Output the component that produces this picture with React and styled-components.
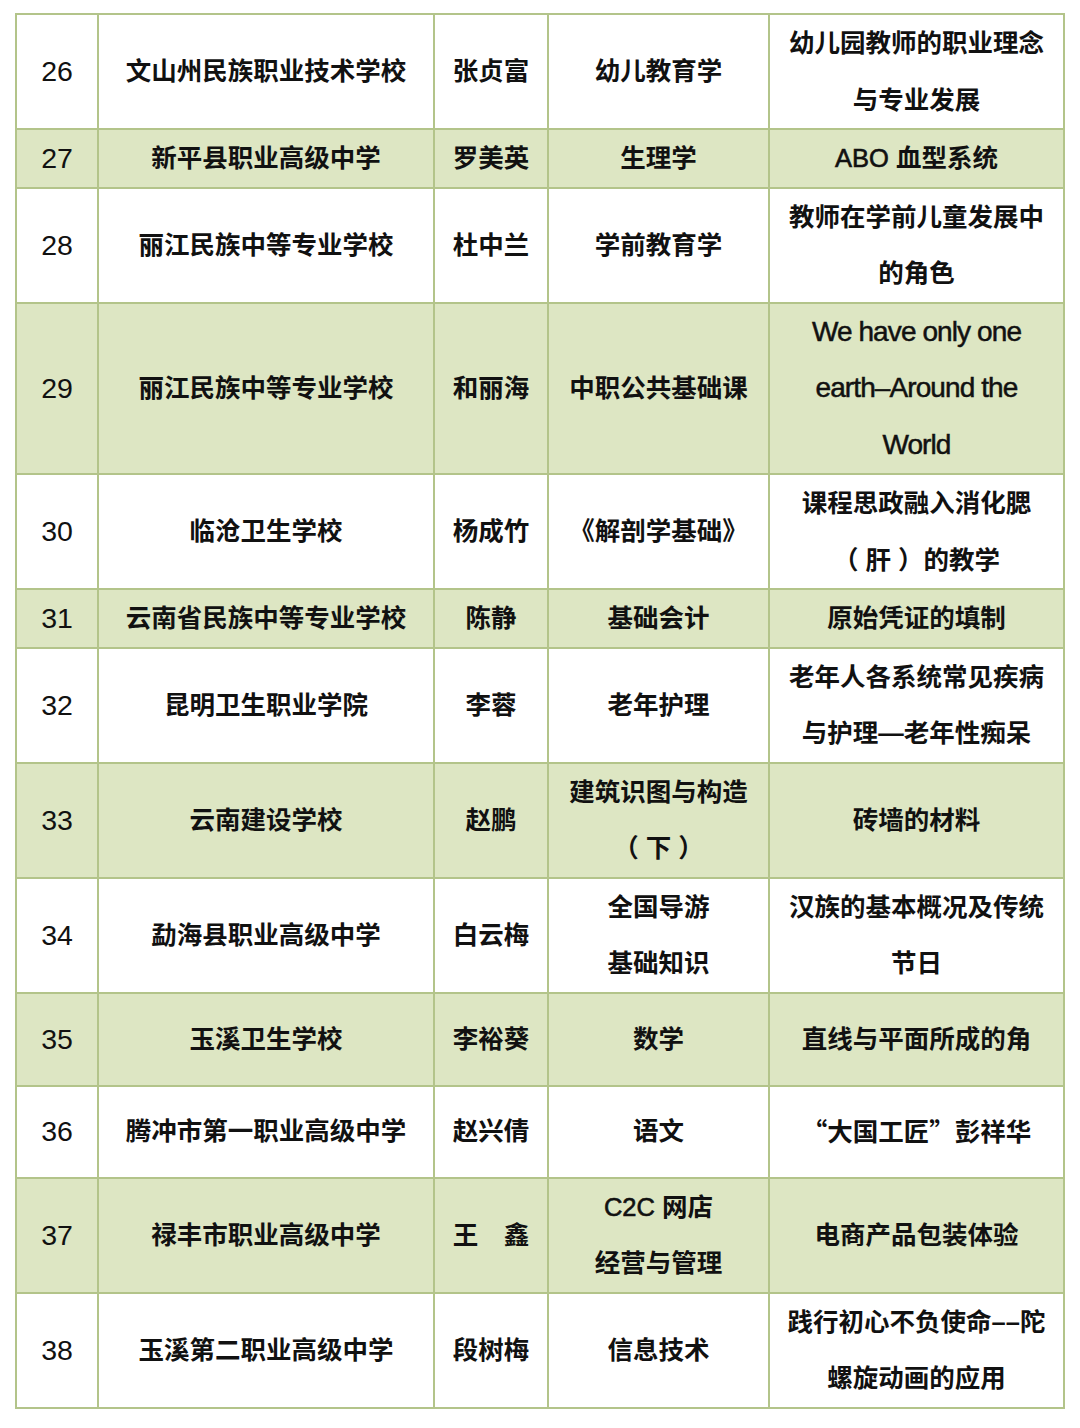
import React from 'react';
import styled, { createGlobalStyle } from 'styled-components';

const GlobalStyle = createGlobalStyle`
  html, body {
    margin: 0;
    padding: 0;
    background: #ffffff;
  }
  body {
    font-family: "Liberation Sans", "Noto Sans CJK SC", sans-serif;
    color: #111;
  }
`;

const LINE = '#b3c48a';
const COLS = '82px 336px 114px 221px 295px';

const Page = styled.div`
  width: 1080px;
  padding: 13px 0 0 15px;
  box-sizing: border-box;
`;

const Sheet = styled.div`
  display: flex;
  flex-direction: column;
  width: fit-content;
  border-top: 2px solid ${LINE};
  border-left: 2px solid ${LINE};
`;

const Row = styled.div`
  display: grid;
  grid-template-columns: ${COLS};
  min-height: ${p => (p.$h ? `${p.$h}px` : '0')};
  background: ${p => (p.$shaded ? '#dde6c3' : '#ffffff')};
`;

const Cell = styled.div`
  display: flex;
  align-items: center;
  justify-content: center;
  box-sizing: border-box;
  border-right: 2px solid ${LINE};
  border-bottom: 2px solid ${LINE};
  padding: 0 6px;
`;

const CellText = styled.div`
  text-align: center;
  white-space: nowrap;
  font-size: 25.5px;
  font-weight: 700;
  line-height: 56.5px;
  color: #111;
  font-family: "Liberation Sans", "Noto Sans CJK SC", sans-serif;
`;

const NumText = styled(CellText)`
  font-size: 28.5px;
  font-weight: 400;
`;

const LatinText = styled(CellText)`
  font-size: 28px;
  font-weight: 400;
  letter-spacing: -0.9px;
  -webkit-text-stroke: 0.5px #111;
`;

// Latin words inside Chinese cells are set a little lighter
const Latin = styled.span`
  font-weight: 400;
  -webkit-text-stroke: 0.6px #111;
`;

const Cjk = styled.span`
  font-family: "Noto Sans CJK SC", sans-serif;
`;

const rows = [
  { n: 26, school: '文山州民族职业技术学校', name: '张贞富', subject: ['幼儿教育学'], topic: ['幼儿园教师的职业理念', '与专业发展'] },
  { n: 27, school: '新平县职业高级中学', name: '罗美英', subject: ['生理学'], topic: [<React.Fragment key="a"><Latin>ABO</Latin> 血型系统</React.Fragment>] },
  { n: 28, school: '丽江民族中等专业学校', name: '杜中兰', subject: ['学前教育学'], topic: ['教师在学前儿童发展中', '的角色'] },
  { n: 29, school: '丽江民族中等专业学校', name: '和丽海', subject: ['中职公共基础课'], topic: ['We have only one', 'earth\u2013Around the', 'World'], latin: true },
  { n: 30, school: '临沧卫生学校', name: '杨成竹', subject: ['《解剖学基础》'], topic: ['课程思政融入消化腮', '（ 肝 ）的教学'] },
  { n: 31, school: '云南省民族中等专业学校', name: '陈静', subject: ['基础会计'], topic: ['原始凭证的填制'] },
  { n: 32, school: '昆明卫生职业学院', name: '李蓉', subject: ['老年护理'], topic: ['老年人各系统常见疾病', '与护理—老年性痴呆'] },
  { n: 33, school: '云南建设学校', name: '赵鹏', subject: ['建筑识图与构造', '（ 下 ）'], topic: ['砖墙的材料'] },
  { n: 34, school: '勐海县职业高级中学', name: '白云梅', subject: ['全国导游', '基础知识'], topic: ['汉族的基本概况及传统', '节日'] },
  { n: 35, school: '玉溪卫生学校', name: '李裕葵', subject: ['数学'], topic: ['直线与平面所成的角'], h: 93 },
  { n: 36, school: '腾冲市第一职业高级中学', name: '赵兴倩', subject: ['语文'], topic: [<Cjk key="q">“大国工匠”彭祥华</Cjk>], h: 92 },
  { n: 37, school: '禄丰市职业高级中学', name: '王\u2003鑫', subject: [<React.Fragment key="c"><Latin>C2C</Latin> 网店</React.Fragment>, '经营与管理'], topic: ['电商产品包装体验'] },
  { n: 38, school: '玉溪第二职业高级中学', name: '段树梅', subject: ['信息技术'], topic: ['践行初心不负使命\u2013\u2013陀', '螺旋动画的应用'] },
];

const Lines = ({ items }) =>
  items.map((t, i) => (
    <React.Fragment key={i}>
      {i > 0 && <br />}
      {t}
    </React.Fragment>
  ));

export default function App() {
  return (
    <>
      <GlobalStyle />
      <Page>
        <Sheet>
          {rows.map((r, i) => {
            const Topic = r.latin ? LatinText : CellText;
            return (
              <Row key={r.n} $shaded={i % 2 === 1} $h={r.h}>
                <Cell><NumText>{r.n}</NumText></Cell>
                <Cell><CellText>{r.school}</CellText></Cell>
                <Cell><CellText>{r.name}</CellText></Cell>
                <Cell><CellText><Lines items={r.subject} /></CellText></Cell>
                <Cell><Topic><Lines items={r.topic} /></Topic></Cell>
              </Row>
            );
          })}
        </Sheet>
      </Page>
    </>
  );
}
